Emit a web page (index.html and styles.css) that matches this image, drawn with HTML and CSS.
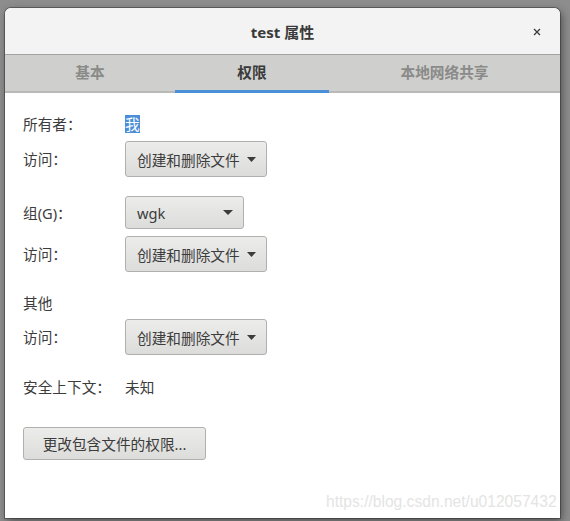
FILE: index.html
```html
<!DOCTYPE html>
<html lang="zh-CN">
<head>
<meta charset="utf-8">
<title>test 属性</title>
<link rel="stylesheet" href="styles.css">
</head>
<body>
<div class="window">
  <header class="titlebar">
    <span class="title">test 属性</span>
    <span class="close">
      <svg width="8" height="8" viewBox="0 0 8 8"><path d="M1 1 L7 7 M7 1 L1 7" stroke="#3c3c3c" stroke-width="1.3" fill="none"/></svg>
    </span>
  </header>
  <nav class="tabs">
    <div class="tab tab-basic">基本</div>
    <div class="tab tab-perm active">权限</div>
    <div class="tab tab-share">本地网络共享</div>
  </nav>
  <main class="content">
    <div class="row row-owner"><span class="label">所有者：</span><span class="value"><span class="sel">我</span></span></div>
    <div class="row row-btn gap-7"><span class="label">访问：</span><span class="combo combo-access"><span>创建和删除文件</span><svg class="arrow" width="9" height="5" viewBox="0 0 9 5"><path d="M0 0 H9 L4.5 5 Z" fill="#3c3c3c"/></svg></span></div>
    <div class="row row-grp gap-19"><span class="label">组(G)：</span><span class="combo combo-group"><span>wgk</span><svg class="arrow" width="10" height="5" viewBox="0 0 10 5"><path d="M0 0 H10 L5 5 Z" fill="#3c3c3c"/></svg></span></div>
    <div class="row row-btn gap-7"><span class="label">访问：</span><span class="combo combo-access"><span>创建和删除文件</span><svg class="arrow" width="9" height="5" viewBox="0 0 9 5"><path d="M0 0 H9 L4.5 5 Z" fill="#3c3c3c"/></svg></span></div>
    <div class="row row-text gap-21"><span class="label">其他</span></div>
    <div class="row row-btn gap-6"><span class="label">访问：</span><span class="combo combo-access"><span>创建和删除文件</span><svg class="arrow" width="9" height="5" viewBox="0 0 9 5"><path d="M0 0 H9 L4.5 5 Z" fill="#3c3c3c"/></svg></span></div>
    <div class="row row-text gap-22"><span class="label">安全上下文：</span><span class="value">未知</span></div>
    <div class="row row-action gap-30"><span class="button">更改包含文件的权限...</span></div>
  </main>
  <div class="watermark">https://blog.csdn.net/u012057432</div>
</div>
</body>
</html>
```
FILE: styles.css
```css
html, body {
  margin: 0;
  padding: 0;
}
body {
  width: 570px;
  height: 521px;
  overflow: hidden;
  background: #8d8d8d;
  font-family: "Noto Sans", "Noto Sans CJK SC", sans-serif;
  font-size: 14.67px;
  color: #3c3c3c;
}
.window {
  position: relative;
  margin: 8px 0 0 5px;
  width: 555px;
  height: 510px;
  background: #ffffff;
  border-radius: 6px 6px 0 0;
  box-shadow: 0 0 0 1px rgba(40, 40, 40, 0.45), 2px 3px 8px rgba(0, 0, 0, 0.45);
  display: flex;
  flex-direction: column;
  overflow: hidden;
}
.titlebar {
  height: 46px;
  flex: 0 0 46px;
  background: #f3f3f3;
  border-bottom: 1px solid #a3a3a1;
  display: flex;
  align-items: center;
  justify-content: center;
  position: relative;
}
.title {
  font-weight: bold;
  font-size: 15px;
  color: #3a3a3a;
}
.close {
  position: absolute;
  right: 19px;
  top: 20px;
  width: 8px;
  height: 8px;
  display: flex;
}
.tabs {
  flex: 0 0 38px;
  height: 38px;
  box-sizing: border-box;
  background: #cfcfcd;
  display: flex;
  box-shadow: inset 0 -2px 0 #b9b9b7;
}
.tab {
  box-sizing: border-box;
  display: flex;
  align-items: center;
  justify-content: center;
  font-weight: bold;
  color: #8a8a89;
  padding-bottom: 2px;
  border-bottom: 3px solid transparent;
}
.tab-basic { width: 170px; }
.tab-perm { width: 154px; }
.tab-share { flex: 1; }
.tab.active {
  color: #3a3a3a;
  border-bottom-color: #4a90d9;
}
.content {
  padding: 21px 0 0 18px;
  display: flex;
  flex-direction: column;
}
.row {
  display: flex;
  align-items: center;
}
.label {
  width: 102px;
  flex: 0 0 102px;
  line-height: 20px;
}
.row-owner, .row-text { height: 20px; }
.row-btn { height: 36px; }
.row-grp { height: 33px; }
.row-action { height: 33px; }
.gap-6 { margin-top: 6px; }
.gap-7 { margin-top: 7px; }
.gap-19 { margin-top: 19px; }
.gap-21 { margin-top: 21px; }
.gap-22 { margin-top: 22px; }
.gap-30 { margin-top: 30px; }
.value { line-height: 18px; }
.sel {
  display: inline-block;
  background: #4a8fd8;
  color: #ffffff;
  line-height: 18px;
}
.combo, .button {
  box-sizing: border-box;
  height: 100%;
  display: flex;
  align-items: center;
  background: linear-gradient(#ececeb, #dcdcda);
  border: 1px solid #b0b0ae;
  border-radius: 3px;
  color: #3c3c3c;
}
.combo {
  justify-content: space-between;
  padding: 0 10px 0 11px;
}
.combo-access { width: 142px; }
.combo-group { width: 119px; }
.arrow { flex: 0 0 auto; }
.button {
  width: 183px;
  justify-content: center;
}
.watermark {
  position: absolute;
  left: 321px;
  bottom: 7px;
  font-family: "Liberation Sans", Arial, sans-serif;
  font-size: 15.6px;
  color: #e4e4e4;
  white-space: nowrap;
}
```
